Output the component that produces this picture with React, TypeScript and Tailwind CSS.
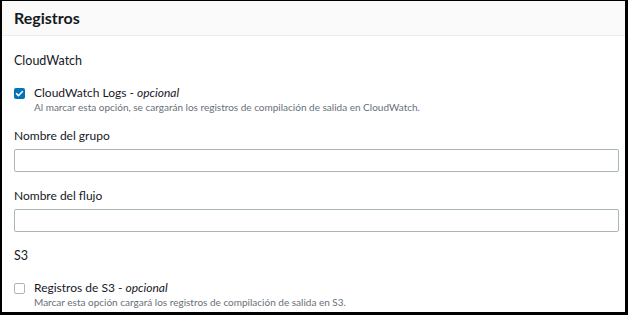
import React from 'react';

const CheckIcon = () => (
  <svg viewBox="0 0 12 12" className="w-[9px] h-[9px]" fill="none" aria-hidden="true">
    <path d="M2 6.2l2.6 2.6L10 3.4" stroke="white" strokeWidth={2} strokeLinecap="round" strokeLinejoin="round" />
  </svg>
);

interface OptionProps {
  checked: boolean;
  label: string;
  description: string;
}

const Option: React.FC<OptionProps> = ({ checked, label, description }) => (
  <div className="flex items-start gap-[9px]">
    <div
      className={`mt-[3px] w-[11px] h-[11px] rounded-[2px] flex items-center justify-center flex-shrink-0 ${
        checked ? 'bg-[#0073bb]' : 'bg-white border border-[#aab7b8]'
      }`}
    >
      {checked && <CheckIcon />}
    </div>
    <div className="flex flex-col">
      <span className="text-[12px] leading-[16px] text-[#16191f]">
        {label} - <i>opcional</i>
      </span>
      <span className="text-[10px] leading-[12px] text-[#687078]">{description}</span>
    </div>
  </div>
);

const Field: React.FC<{ label: string }> = ({ label }) => (
  <div className="flex flex-col">
    <span className="text-[12px] leading-[16px] text-[#16191f] mb-[5px]">{label}</span>
    <div className="h-[23px] border border-[#aab7b8] rounded-[2px] bg-white" />
  </div>
);

export default function App() {
  return (
    <div
      className="w-[628px] h-[315px] bg-black pl-[2px] pt-[1px] pr-[3px] pb-[3px]"
      style={{ fontFamily: 'Lato, "Open Sans", sans-serif' }}
    >
      <div className="h-full bg-white flex flex-col overflow-hidden">
        <div className="h-[35px] bg-[#fafafa] border-b border-[#eaeded] flex items-center px-[12px] flex-shrink-0">
          <h2 className="text-[16px] font-bold text-[#16191f] leading-none">Registros</h2>
        </div>
        <div className="flex flex-col pl-[12px] pr-[6px]">
          <div className="text-[12.5px] text-[#16191f] leading-[16px] mt-[17px]">CloudWatch</div>
          <div className="mt-[16px]">
            <Option
              checked
              label="CloudWatch Logs"
              description="Al marcar esta opción, se cargarán los registros de compilación de salida en CloudWatch."
            />
          </div>
          <div className="mt-[15px]">
            <Field label="Nombre del grupo" />
          </div>
          <div className="mt-[16px]">
            <Field label="Nombre del flujo" />
          </div>
          <div className="text-[12.5px] text-[#16191f] leading-[16px] mt-[16px]">S3</div>
          <div className="mt-[16px]">
            <Option
              checked={false}
              label="Registros de S3"
              description="Marcar esta opción cargará los registros de compilación de salida en S3."
            />
          </div>
        </div>
      </div>
    </div>
  );
}
